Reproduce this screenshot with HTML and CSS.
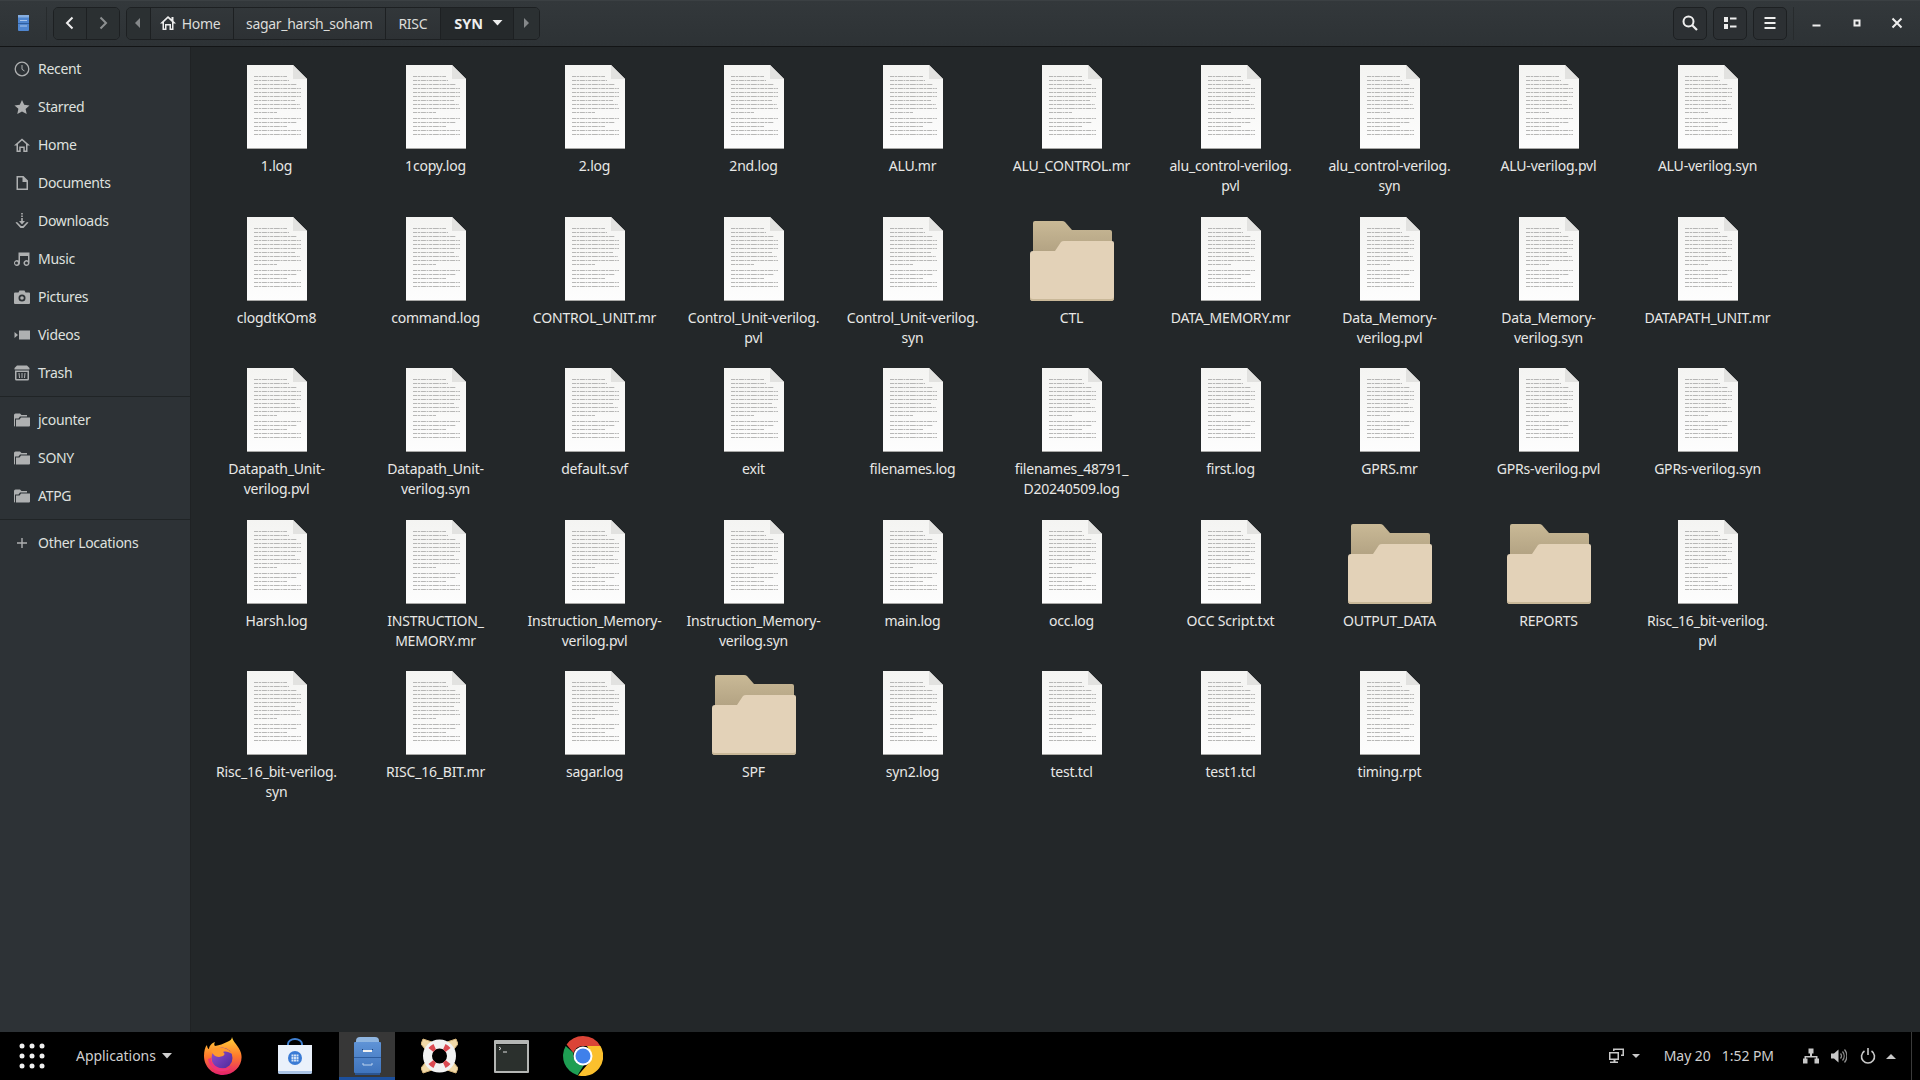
FILE: index.html
```html
<!DOCTYPE html>
<html lang="en">
<head>
<meta charset="utf-8">
<title>SYN</title>
<link rel="stylesheet" href="styles.css">
</head>
<body>
<svg class="defs" width="0" height="0" aria-hidden="true">
  <defs>
    <linearGradient id="pg" x1="0" y1="0" x2="0" y2="1"><stop offset="0" stop-color="#f4f4f2"/><stop offset="1" stop-color="#fdfdfd"/></linearGradient>
    <linearGradient id="fb" x1="0" y1="0" x2="0" y2="1"><stop offset="0" stop-color="#c9b996"/><stop offset="1" stop-color="#a8987a"/></linearGradient>
    <linearGradient id="ff" x1="0" y1="0" x2="0" y2="1"><stop offset="0" stop-color="#ffd23a"/><stop offset=".5" stop-color="#ff7a2b"/><stop offset="1" stop-color="#e3206e"/></linearGradient>
    <linearGradient id="fg" x1="0" y1="0" x2="1" y2="1"><stop offset="0" stop-color="#9a4fd0"/><stop offset="1" stop-color="#4b2a9c"/></linearGradient>
    <linearGradient id="cab" x1="0" y1="0" x2="0" y2="1"><stop offset="0" stop-color="#5f93d6"/><stop offset="1" stop-color="#3f74bd"/></linearGradient>
    <symbol id="doc" viewBox="0 0 60 84">
      <path d="M0 0H46L60 14V84H0Z" fill="url(#pg)"/>
      <path d="M0 83H60V84H0Z" fill="#a9a9a7"/>
      <path d="M46 0V14H60Z" fill="#e2e2e0"/>
      <path d="M46 0 60 14" stroke="#c4c4c2" stroke-width=".6"/>
      <g stroke="#a6a6a4" stroke-width=".8" stroke-dasharray="4 .7 2.500 .7 5 .7 1.800 .7 3 .7 6 .7 2 .7">
        <path d="M7 11.500H40M7 15.500H42M7 19.500H50M7 23.500H54M7 27.500H54M7 31.500H54M7 35.500H48M7 39.500H53M7 43.500H54M7 47.500H30M7 53.500H54M7 57.500H50M7 61.500H40M7 65.500H54M7 69.500H54"/>
      </g>
    </symbol>
    <symbol id="folder" viewBox="0 0 84 84">
      <path d="M3 6Q3 4 5 4H32Q34 4 35 5L42 13H80Q82 13 82 15V50H3Z" fill="url(#fb)"/>
      <path d="M0 37Q0 34 3 34H25L31 25Q32 24 34 24H82Q84 24 84 26V81Q84 84 81 84H3Q0 84 0 81Z" fill="#e3d2b8"/>
      <path d="M0 81V79Q0 82 3 82H81Q84 82 84 79V81Q84 84 81 84H3Q0 84 0 81Z" fill="#c9b898"/>
    </symbol>
    <symbol id="s-folder" viewBox="0 0 16 16">
      <path d="M0 3Q0 1.500 1.500 1.500H6L7.500 3H13V4.500H6L4.500 6.500H1V14.500H.8Q0 14.500 0 13.500Z"/>
      <path d="M2 7.500H5.500L7 5.500H16V13.500Q16 14.500 15 14.500H2Z"/>
    </symbol>
  </defs>
</svg>

<div class="window">
  <header class="headerbar">
    <svg class="app-icon" viewBox="0 0 11 16" width="11" height="16"><rect width="11" height="16" rx="1" fill="#4f86d0"/><rect y="0" width="11" height="2.500" fill="#86aee0"/><path d="M2 5.500H9M2 11H9" stroke="#a9c6ea" stroke-width="1"/><path d="M0 8.500H11" stroke="#2f5f9f"/></svg>
    <span class="hsep"></span>
    <div class="btn-group nav-group">
      <button class="hb nav"><svg viewBox="0 0 16 16" width="16" height="16"><path d="M10.500 2.500 5 8l5.500 5.500" fill="none" stroke="#eee" stroke-width="2"/></svg></button>
      <button class="hb nav"><svg viewBox="0 0 16 16" width="16" height="16"><path d="M5.500 2.500 11 8l-5.500 5.500" fill="none" stroke="#8d9091" stroke-width="2"/></svg></button>
    </div>
    <div class="btn-group path-group">
      <button class="hb seg seg-arrow"><svg viewBox="0 0 8 12" width="8" height="12"><path d="M6 1 1 6l5 5Z" fill="#85888a"/></svg></button>
      <button class="hb seg seg-home"><svg viewBox="0 0 16 16" width="16" height="16"><path fill-rule="evenodd" d="M8 1 0 8.500h2.500V15h4v-4.500h3V15h4V8.500H16L13.500 6V2h-2v2Zm0 2.200L12 7v6.500h-1V9H5v4.500H4V7Z" fill="#eee"/></svg><span>Home</span></button>
      <button class="hb seg seg-sagar">sagar_harsh_soham</button>
      <button class="hb seg seg-risc">RISC</button>
      <button class="hb seg seg-syn"><b>SYN</b><svg viewBox="0 0 10 6" width="11" height="6"><path d="M0 0H10L5 5.500Z" fill="#eee"/></svg></button>
      <button class="hb seg seg-arrow"><svg viewBox="0 0 8 12" width="8" height="12"><path d="M2 1l5 5-5 5Z" fill="#85888a"/></svg></button>
    </div>
    <div class="spacer"></div>
    <button class="hb tool"><svg viewBox="0 0 16 16" width="16" height="16"><circle cx="6.500" cy="6.500" r="5" fill="none" stroke="#eee" stroke-width="2"/><path d="m10 10 5 5" stroke="#eee" stroke-width="2.200"/></svg></button>
    <button class="hb tool"><svg viewBox="0 0 16 16" width="16" height="16"><path d="M2 2h4v5H2ZM2 9h4v5H2Z" fill="#eee"/><path d="M8 3.500h6.500M8 11.500h6.500" stroke="#eee" stroke-width="2"/></svg></button>
    <button class="hb tool"><svg viewBox="0 0 16 16" width="16" height="16"><path d="M2.500 3h11M2.500 8h11M2.500 13h11" stroke="#eee" stroke-width="2"/></svg></button>
    <span class="hsep hsep-r"></span>
    <div class="wm">
      <span class="wm-btn"><svg viewBox="0 0 16 16" width="16" height="16"><path d="M3.500 10.500h8" stroke="#eee" stroke-width="2"/></svg></span>
      <span class="wm-btn"><svg viewBox="0 0 16 16" width="16" height="16"><rect x="4.500" y="4.500" width="7" height="7" fill="#eee"/><rect x="6.500" y="6.500" width="3" height="3" fill="#2e3336"/></svg></span>
      <span class="wm-btn"><svg viewBox="0 0 16 16" width="16" height="16"><path d="m3.500 3.500 9 9M12.500 3.500l-9 9" stroke="#eee" stroke-width="2"/></svg></span>
    </div>
  </header>

  <div class="body">
    <nav class="sidebar">
      <div class="row"><svg viewBox="0 0 16 16"><circle cx="8" cy="8" r="6.800" fill="none" stroke-width="1.300" stroke="currentColor"/><path d="M8 4v4.300L5.500 10" fill="none" stroke="currentColor" stroke-width="1" transform="matrix(-1 0 0 1 16 0)"/></svg><span>Recent</span></div>
      <div class="row"><svg viewBox="0 0 16 16"><path d="m8 1 2.200 4.800 5.300.6-3.900 3.500 1.100 5.200L8 12.400 3.300 15l1.100-5.200L.5 6.400l5.300-.6Z"/></svg><span>Starred</span></div>
      <div class="row"><svg viewBox="0 0 16 16"><path fill-rule="evenodd" d="M8 1.500 0 8.500h2.500V15h4.200v-4h2.600v4h4.200V8.500H16Zm0 2L12 7v6.500h-1.200v-4H5.200v4H4V7Z"/></svg><span>Home</span></div>
      <div class="row"><svg viewBox="0 0 16 16"><path fill-rule="evenodd" d="M2.500 1h7L14 5.500V15H2.500ZM4 2.500v11h8.500V7H8.500V2.500Z"/></svg><span>Documents</span></div>
      <div class="row"><svg viewBox="0 0 16 16"><path d="M7.200 0h1.600v1.500H7.200ZM7.200 2.500h1.600V4H7.200ZM7.200 5h1.600v3H11L8 11.500 5 8h2.200ZM1.500 9.500 3 9l4 4h2l4-4 1.500.5L9.500 15h-3Z"/></svg><span>Downloads</span></div>
      <div class="row"><svg viewBox="0 0 16 16"><path fill-rule="evenodd" d="M5 1.500h11V12a3 3 0 1 1-1.500-2.600V5H6.500v7a3 3 0 1 1-1.500-2.600ZM3 10.500a1.500 1.500 0 1 0 0 3 1.500 1.500 0 0 0 0-3Zm10 0a1.500 1.500 0 1 0 0 3 1.500 1.500 0 0 0 0-3Z" transform="translate(-.5)"/></svg><span>Music</span></div>
      <div class="row"><svg viewBox="0 0 16 16"><path fill-rule="evenodd" d="M1 3.500h3.500L5.500 1.500h5l1 2H15q1 0 1 1V14q0 1-1 1H1q-1 0-1-1V4.500q0-1 1-1ZM8 5.500a3.500 3.500 0 1 0 0 7 3.500 3.500 0 0 0 0-7Zm0 1.700a1.800 1.800 0 1 1 0 3.600 1.800 1.800 0 0 1 0-3.600Z"/></svg><span>Pictures</span></div>
      <div class="row"><svg viewBox="0 0 16 16"><path d="M5 3.500h11v9H5ZM.5 5 4 8 .5 11Z"/></svg><span>Videos</span></div>
      <div class="row"><svg viewBox="0 0 16 16"><path fill-rule="evenodd" d="M3 .5h10L15.500 3v1.500H.5V3ZM1 5.500h14V14q0 1.500-1.500 1.500h-11Q1 15.500 1 14ZM2.500 7v7h11V7Z"/><path d="M4.500 8h1l.5 5H5ZM7.500 8h1v5h-1ZM10.500 8h1L11 13h-1Z"/></svg><span>Trash</span></div>
      <hr class="sep">
      <div class="row"><svg viewBox="0 0 16 16"><use href="#s-folder"/></svg><span>jcounter</span></div>
      <div class="row"><svg viewBox="0 0 16 16"><use href="#s-folder"/></svg><span>SONY</span></div>
      <div class="row"><svg viewBox="0 0 16 16"><use href="#s-folder"/></svg><span>ATPG</span></div>
      <hr class="sep">
      <div class="row"><svg viewBox="0 0 16 16"><path d="M7.300 3h1.400v4.300H13v1.400H8.700V13H7.300V8.700H3V7.300h4.300Z"/></svg><span>Other Locations</span></div>
    </nav>

    <main class="grid">
      <div class="item"><svg class="ic"><use href="#doc"/></svg><p>1.log</p></div>
      <div class="item"><svg class="ic"><use href="#doc"/></svg><p>1copy.log</p></div>
      <div class="item"><svg class="ic"><use href="#doc"/></svg><p>2.log</p></div>
      <div class="item"><svg class="ic"><use href="#doc"/></svg><p>2nd.log</p></div>
      <div class="item"><svg class="ic"><use href="#doc"/></svg><p>ALU.mr</p></div>
      <div class="item"><svg class="ic"><use href="#doc"/></svg><p>ALU_CONTROL.mr</p></div>
      <div class="item"><svg class="ic"><use href="#doc"/></svg><p>alu_control-verilog.<br>pvl</p></div>
      <div class="item"><svg class="ic"><use href="#doc"/></svg><p>alu_control-verilog.<br>syn</p></div>
      <div class="item"><svg class="ic"><use href="#doc"/></svg><p>ALU-verilog.pvl</p></div>
      <div class="item"><svg class="ic"><use href="#doc"/></svg><p>ALU-verilog.syn</p></div>

      <div class="item"><svg class="ic"><use href="#doc"/></svg><p>clogdtKOm8</p></div>
      <div class="item"><svg class="ic"><use href="#doc"/></svg><p>command.log</p></div>
      <div class="item"><svg class="ic"><use href="#doc"/></svg><p>CONTROL_UNIT.mr</p></div>
      <div class="item"><svg class="ic"><use href="#doc"/></svg><p>Control_Unit-verilog.<br>pvl</p></div>
      <div class="item"><svg class="ic"><use href="#doc"/></svg><p>Control_Unit-verilog.<br>syn</p></div>
      <div class="item"><svg class="ic ic-f"><use href="#folder"/></svg><p>CTL</p></div>
      <div class="item"><svg class="ic"><use href="#doc"/></svg><p>DATA_MEMORY.mr</p></div>
      <div class="item"><svg class="ic"><use href="#doc"/></svg><p>Data_Memory-<br>verilog.pvl</p></div>
      <div class="item"><svg class="ic"><use href="#doc"/></svg><p>Data_Memory-<br>verilog.syn</p></div>
      <div class="item"><svg class="ic"><use href="#doc"/></svg><p>DATAPATH_UNIT.mr</p></div>

      <div class="item"><svg class="ic"><use href="#doc"/></svg><p>Datapath_Unit-<br>verilog.pvl</p></div>
      <div class="item"><svg class="ic"><use href="#doc"/></svg><p>Datapath_Unit-<br>verilog.syn</p></div>
      <div class="item"><svg class="ic"><use href="#doc"/></svg><p>default.svf</p></div>
      <div class="item"><svg class="ic"><use href="#doc"/></svg><p>exit</p></div>
      <div class="item"><svg class="ic"><use href="#doc"/></svg><p>filenames.log</p></div>
      <div class="item"><svg class="ic"><use href="#doc"/></svg><p>filenames_48791_<br>D20240509.log</p></div>
      <div class="item"><svg class="ic"><use href="#doc"/></svg><p>first.log</p></div>
      <div class="item"><svg class="ic"><use href="#doc"/></svg><p>GPRS.mr</p></div>
      <div class="item"><svg class="ic"><use href="#doc"/></svg><p>GPRs-verilog.pvl</p></div>
      <div class="item"><svg class="ic"><use href="#doc"/></svg><p>GPRs-verilog.syn</p></div>

      <div class="item"><svg class="ic"><use href="#doc"/></svg><p>Harsh.log</p></div>
      <div class="item"><svg class="ic"><use href="#doc"/></svg><p>INSTRUCTION_<br>MEMORY.mr</p></div>
      <div class="item"><svg class="ic"><use href="#doc"/></svg><p>Instruction_Memory-<br>verilog.pvl</p></div>
      <div class="item"><svg class="ic"><use href="#doc"/></svg><p>Instruction_Memory-<br>verilog.syn</p></div>
      <div class="item"><svg class="ic"><use href="#doc"/></svg><p>main.log</p></div>
      <div class="item"><svg class="ic"><use href="#doc"/></svg><p>occ.log</p></div>
      <div class="item"><svg class="ic"><use href="#doc"/></svg><p>OCC Script.txt</p></div>
      <div class="item"><svg class="ic ic-f"><use href="#folder"/></svg><p>OUTPUT_DATA</p></div>
      <div class="item"><svg class="ic ic-f"><use href="#folder"/></svg><p>REPORTS</p></div>
      <div class="item"><svg class="ic"><use href="#doc"/></svg><p>Risc_16_bit-verilog.<br>pvl</p></div>

      <div class="item"><svg class="ic"><use href="#doc"/></svg><p>Risc_16_bit-verilog.<br>syn</p></div>
      <div class="item"><svg class="ic"><use href="#doc"/></svg><p>RISC_16_BIT.mr</p></div>
      <div class="item"><svg class="ic"><use href="#doc"/></svg><p>sagar.log</p></div>
      <div class="item"><svg class="ic ic-f"><use href="#folder"/></svg><p>SPF</p></div>
      <div class="item"><svg class="ic"><use href="#doc"/></svg><p>syn2.log</p></div>
      <div class="item"><svg class="ic"><use href="#doc"/></svg><p>test.tcl</p></div>
      <div class="item"><svg class="ic"><use href="#doc"/></svg><p>test1.tcl</p></div>
      <div class="item"><svg class="ic"><use href="#doc"/></svg><p>timing.rpt</p></div>
    </main>
  </div>
</div>

<footer class="taskbar">
  <svg class="dots" viewBox="0 0 26 26" width="26" height="26"><g fill="#eee"><circle cx="3" cy="3" r="2.500"/><circle cx="13" cy="3" r="2.500"/><circle cx="23" cy="3" r="2.500"/><circle cx="3" cy="13" r="2.500"/><circle cx="13" cy="13" r="2.500"/><circle cx="23" cy="13" r="2.500"/><circle cx="3" cy="23" r="2.500"/><circle cx="13" cy="23" r="2.500"/><circle cx="23" cy="23" r="2.500"/></g></svg>
  <span class="apps">Applications</span>
  <svg class="apps-caret" viewBox="0 0 10 6" width="10" height="6"><path d="M0 0H10L5 5.500Z" fill="#cfcfcf"/></svg>
  <div class="launcher">
    <span class="launch"><svg viewBox="0 0 38 38" width="38" height="38"><path d="M28 0c1 5 7 9 9 16 3 11-6 22-18 22C8 38 0 29 0 19c0-5 1-9 3-11 0 2 1 4 2 4 0-3 3-6 6-7-1 2-1 3 0 4 5-1 8-2 12-4 3-1 5-3 5-5Z" fill="url(#ff)"/><circle cx="18" cy="21" r="10.500" fill="url(#fg)"/><path d="M7 14c3-3 7-4 13-3 4 1 6 3 8 6-3-2-6-3-9-2 2 1 2 3 0 4l-4 1C11 20 9 17 7 14Z" fill="#ff9a2e"/><path d="M4 22c1 8 8 13 15 12 4 0 7-2 9-5-5 3-11 3-15 1-4-2-6-5-6-9Z" fill="#f0327c"/></svg></span>
    <span class="launch"><svg viewBox="0 0 34 36" width="34" height="36"><path d="M10 9V6a7 5 0 0 1 14 0v3" fill="none" stroke="#3f7fd0" stroke-width="2"/><path d="M0 7h34v27q0 2-2 2H2q-2 0-2-2Z" fill="#eaf1fb"/><path d="M0 33h34v1q0 2-2 2H2q-2 0-2-2Z" fill="#a9c3e4"/><circle cx="17" cy="20" r="7" fill="#3a7bd5"/><g fill="#d4e3f7"><rect x="13.500" y="16.500" width="2" height="2"/><rect x="16" y="16.500" width="2" height="2"/><rect x="18.500" y="16.500" width="2" height="2"/><rect x="13.500" y="19" width="2" height="2"/><rect x="16" y="19" width="2" height="2"/><rect x="18.500" y="19" width="2" height="2"/><rect x="13.500" y="21.500" width="2" height="2"/><rect x="16" y="21.500" width="2" height="2"/><rect x="18.500" y="21.500" width="2" height="2"/></g></svg></span>
    <span class="launch active"><svg viewBox="0 0 27 38" width="27" height="38"><path d="M2 4Q2 0 6 0h15q4 0 4 4v2H2Z" fill="#8fb5e0"/><rect y="5" width="27" height="31" rx="1" fill="url(#cab)"/><path d="M0 20.500H27" stroke="#2d5c9e"/><rect x="9" y="13" width="9" height="2" fill="#f0f0f0"/><path d="M8.500 12v1M18.500 12v1" stroke="#1e3f70"/><path d="M9 26v2h9v-2" fill="none" stroke="#bcd3ef"/><rect x="1" y="36" width="25" height="2" fill="#2b5591"/></svg></span>
    <span class="launch"><svg viewBox="0 0 37 36" width="37" height="36"><path d="M2 1 11 4 4 11 0 6ZM35 1 26 4l7 7 4-5ZM2 35l9-3-7-7-4 5ZM35 35l-9-3 7-7 4 5Z" fill="#f1d9a8" stroke="#d9b97e" stroke-width="1"/><circle cx="18.500" cy="18" r="12" fill="none" stroke="#f2f2f2" stroke-width="9"/><path d="M7.500 10a13.500 13.500 0 0 1 5-4L15 11.500a7 7 0 0 0-2.500 2.500ZM29.500 10a13.500 13.500 0 0 0-5-4L22 11.500a7 7 0 0 1 2.500 2.500ZM7.500 26a13.500 13.500 0 0 0 5 4L15 24.500a7 7 0 0 1-2.500-2.500ZM29.500 26a13.500 13.500 0 0 1-5 4L22 24.500a7 7 0 0 0 2.500-2.500Z" fill="#dc4a52"/></svg></span>
    <span class="launch"><svg viewBox="0 0 35 33" width="35" height="33"><rect width="35" height="33" rx="1" fill="#b4b6b4"/><rect x="2" y="4" width="31" height="27" fill="#2b302d"/><path d="M2 4h31v1H2Z" fill="#1a1d1b"/><path d="M5 7l2 1.500L5 10" fill="none" stroke="#ddd"/><path d="M9 12h4" stroke="#ddd"/></svg></span>
    <span class="launch"><svg viewBox="0 0 40 40" width="40" height="40"><path d="M20 0a20 20 0 0 1 17.300 10H20a10 10 0 0 0-9.500 7L3.600 8.500A20 20 0 0 1 20 0Z" fill="#db4437"/><path d="M2.700 10A20 20 0 0 0 14.500 39.200l6.500-10.200a10 10 0 0 1-10.500-12Z" fill="#1e9e53"/><path d="M37.500 10A20 20 0 0 1 15 39.400L24 29a10 10 0 0 0 3-13L24 10Z" fill="#fbc02d"/><circle cx="20" cy="20" r="9.500" fill="#fff"/><circle cx="20" cy="20" r="7.500" fill="#3f80ea"/></svg></span>
  </div>
  <div class="spacer"></div>
  <div class="tray">
    <svg class="t-disp" viewBox="0 0 16 16" width="16" height="16"><path fill-rule="evenodd" d="M4 .500h11v7.500h-3V6.500h1.500V2H5.500v1H4ZM0 4h10v8H6.500v1.500H9V15H1v-1.500h3.500V12H0Zm1.500 1.500v5h7v-5Z" fill="#c8c8c8"/></svg>
    <svg class="t-caret" viewBox="0 0 8 4" width="8" height="4"><path d="M0 0H8L4 4Z" fill="#c8c8c8"/></svg>
    <span class="t-date">May 20</span>
    <span class="t-time">1:52 PM</span>
    <svg class="t-net" viewBox="0 0 16 16" width="16" height="16"><path d="M5.500 0h5v5H9V7.500h5.500V10H16v5h-4.500v-5H13V9H3v1h1.500v5H0v-5h1.500V7.500H7V5H5.500Z" fill="#c8c8c8" transform="translate(0 .5)"/></svg>
    <svg class="t-vol" viewBox="0 0 16 16" width="16" height="16"><path d="M0 5.500h3L7.500 1.500v13L3 10.500H0Z" fill="#c8c8c8"/><path d="M9.500 5.500a4 4 0 0 1 0 5M11.500 3.500a7 7 0 0 1 0 9M13.500 1.500a10 10 0 0 1 0 13" fill="none" stroke="#8c8c8c" stroke-width="1.300"/></svg>
    <svg class="t-pow" viewBox="0 0 16 16" width="16" height="16"><path d="M4.500 3a6.500 6.500 0 1 0 7 0M8 0v7" fill="none" stroke="#c8c8c8" stroke-width="1.600"/></svg>
    <svg class="t-up" viewBox="0 0 10 5" width="10" height="5"><path d="M0 5H10L5 0Z" fill="#c8c8c8"/></svg>
    <span class="t-line"></span>
  </div>
</footer>
</body>
</html>
```
FILE: styles.css
```css
* { box-sizing: border-box; }
html, body { margin: 0; height: 100%; }
body {
  width: 1920px;
  height: 1080px;
  overflow: hidden;
  display: flex;
  flex-direction: column;
  background: #232729;
  color: #eeeeec;
  font-family: "Noto Sans", "Open Sans", sans-serif;
  font-size: 14px;
}
.defs { position: absolute; }
.window { flex: 1; display: flex; flex-direction: column; min-height: 0; }

.headerbar {
  height: 47px;
  flex: none;
  display: flex;
  align-items: center;
  padding: 0 0 1px 17px;
  background: linear-gradient(#33383b, #2d3235);
  border-top: 1px solid #3b4043;
  border-bottom: 1px solid #131516;
}
.app-icon { flex: none; margin-left: 1px; }
.hsep { width: 1px; height: 33px; background: #272b2d; margin: 0 6px 0 17px; flex: none; }
.hsep-r { margin: 0 0 0 6px; }
.spacer { flex: 1; }
.btn-group { display: flex; height: 33px; border: 1px solid #1d2022; border-radius: 5px; overflow: hidden; flex: none; }
.hb {
  display: flex;
  align-items: center;
  justify-content: center;
  gap: 6px;
  padding: 0;
  margin: 0;
  height: 100%;
  font: inherit;
  letter-spacing: -.3px;
  color: #dcdcda;
  background: #2e3336;
  border: 0;
  border-right: 1px solid #1d2022;
}
.hb:last-child { border-right: 0; }
.nav-group { width: 67px; margin-right: 5.500px; }
.nav { flex: 1; background: #2b3032; }
.path-group { width: 414px; }
.seg-arrow { width: 25px; background: #2b3032; }
.seg-home { width: 82.500px; padding-right: 4px; background: linear-gradient(#32373a, #2d3134); }
.seg-sagar { width: 152.500px; background: linear-gradient(#32373a, #2d3134); }
.seg-risc { width: 55px; background: linear-gradient(#32373a, #2d3134); }
.seg-syn { width: 73px; gap: 9px; padding-left: 4px; background: #25292b; color: #eee; }
.seg-syn b { font-weight: 700; font-size: 14.500px; letter-spacing: 0; }
.tool {
  width: 34px;
  height: 33px;
  margin-left: 6px;
  flex: none;
  border: 1px solid #1d2022;
  border-radius: 5px;
  background: #2c3033;
}
.hb.tool:last-child { border: 1px solid #1d2022; }
.wm { display: flex; width: 126px; padding-left: 2.500px; flex: none; }
.wm-btn { width: 40px; display: flex; justify-content: center; align-items: center; }

.body { flex: 1; display: flex; min-height: 0; }
.sidebar {
  width: 191px;
  flex: none;
  padding-top: 2.500px;
  background: #2d3236;
  border-right: 1px solid #1f2224;
  color: #dfe0df;
  letter-spacing: -.3px;
}
.row { height: 38px; display: flex; align-items: center; gap: 8px; padding-left: 14px; }
.row svg { width: 16px; height: 16px; flex: none; fill: #aeb0b1; color: #aeb0b1; }
.sep { height: 1px; margin: 4px 0; border: 0; background: #202426; }

.grid {
  flex: 1;
  display: grid;
  grid-template-columns: repeat(10, 159px);
  grid-auto-rows: 151.500px;
  align-content: start;
  padding: 18px 0 0 6px;
  letter-spacing: -.2px;
}
.item { display: flex; flex-direction: column; align-items: center; }
.ic { width: 60px; height: 84px; flex: none; }
.ic-f { width: 84px; }
.item p { margin: 7px 0 0; line-height: 20px; text-align: center; color: #e8e8e6; white-space: nowrap; }

.taskbar {
  height: 48px;
  flex: none;
  display: flex;
  align-items: center;
  background: #000;
  color: #cfcfcf;
  font-size: 14px;
  letter-spacing: -.05px;
}
.dots { margin-left: 19px; flex: none; }
.apps { margin-left: 31px; margin-top: -1px; }
.apps-caret { margin-left: 6px; flex: none; }
.launcher { display: flex; gap: 16px; position: absolute; left: 195px; bottom: 0; }
.launch { width: 56px; height: 48px; display: flex; align-items: center; justify-content: center; }
.launch.active { background: #373737; border-bottom: 3px solid #1c4f9c; }
.launch.active svg { margin-top: 3px; }
.tray { display: flex; align-items: center; height: 48px; position: relative; padding-right: 24px; }
.t-date, .t-time { margin-top: -1px; }
.t-disp { margin-right: 7px; }
.t-caret { margin-right: 24px; }
.t-time { margin-left: 11px; }
.t-net { margin-left: 29px; }
.t-vol { margin-left: 12px; }
.t-pow { margin-left: 13px; }
.t-up { margin-left: 10px; }
.t-line { position: absolute; right: 8px; top: 0; width: 1px; height: 48px; background: #3a3a3a; }
```
